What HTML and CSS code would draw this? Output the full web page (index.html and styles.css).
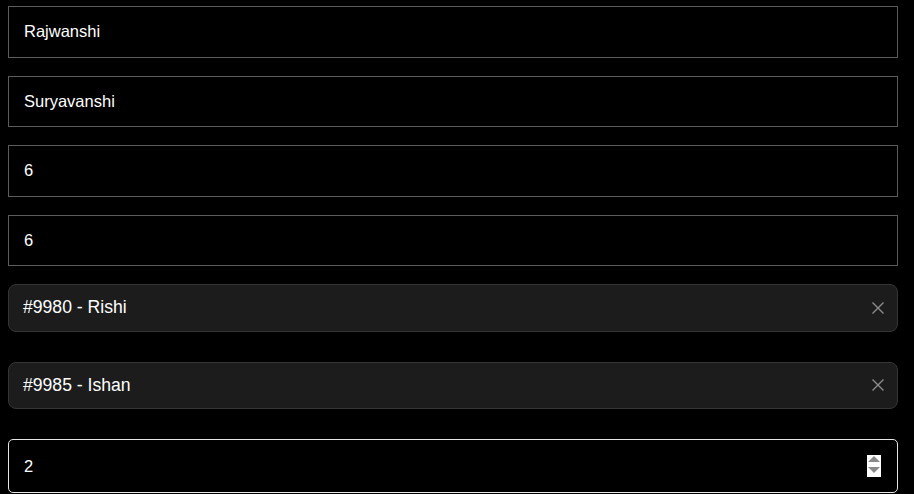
FILE: index.html
```html
<!DOCTYPE html>
<html>
<head>
<meta charset="utf-8">
<link rel="stylesheet" href="styles.css">
</head>
<body>
<div class="form">
  <div class="field">Rajwanshi</div>
  <div class="field">Suryavanshi</div>
  <div class="field">6</div>
  <div class="field">6</div>
  <div class="select">
    <span class="select-value">#9980 - Rishi</span>
    <svg class="clear" width="12" height="12" viewBox="0 0 12 12"><path d="M0.5 0.5 L11.5 11.5 M11.5 0.5 L0.5 11.5" stroke="#8c8c8c" stroke-width="1.4" fill="none"/></svg>
  </div>
  <div class="select">
    <span class="select-value">#9985 - Ishan</span>
    <svg class="clear" width="12" height="12" viewBox="0 0 12 12"><path d="M0.5 0.5 L11.5 11.5 M11.5 0.5 L0.5 11.5" stroke="#8c8c8c" stroke-width="1.4" fill="none"/></svg>
  </div>
  <div class="number">
    <span>2</span>
    <div class="spinner">
      <svg width="14" height="22" viewBox="0 0 14 22"><path d="M1 7 L7 1 L13 7 Z" fill="#8a8a8a"/><path d="M1 12 L13 12 L7 18 Z" fill="#8a8a8a"/></svg>
    </div>
  </div>
</div>
</body>
</html>
```
FILE: styles.css
```css
html, body {
  margin: 0;
  padding: 0;
  background: #000;
  overflow: hidden;
}
body {
  font-family: "Liberation Sans", Arial, sans-serif;
  color: #fff;
}
.form {
  display: flex;
  flex-direction: column;
  padding: 6px 16px 0 8px;
  width: 890px;
}
.field {
  box-sizing: border-box;
  height: 51.5px;
  border: 1px solid #5c5c5c;
  padding: 0 15px;
  font-size: 16.5px;
  display: flex;
  align-items: center;
  margin-bottom: 18px;
}
.select {
  box-sizing: border-box;
  height: 47.5px;
  background: #1c1c1c;
  border: 1px solid #353535;
  border-radius: 8px;
  padding: 0 13px 0 14px;
  font-size: 17.6px;
  display: flex;
  align-items: center;
  justify-content: space-between;
  margin-bottom: 30px;
}
.clear {
  display: block;
}
.number {
  box-sizing: border-box;
  height: 54px;
  border: 1px solid #e6e6e6;
  border-radius: 5px;
  padding: 0 15px;
  font-size: 16.5px;
  display: flex;
  align-items: center;
  justify-content: space-between;
}
.spinner {
  background: #fff;
  width: 14px;
  height: 22px;
  margin-right: 1px;
  margin-top: 0px;
}
.spinner svg {
  display: block;
}
```
